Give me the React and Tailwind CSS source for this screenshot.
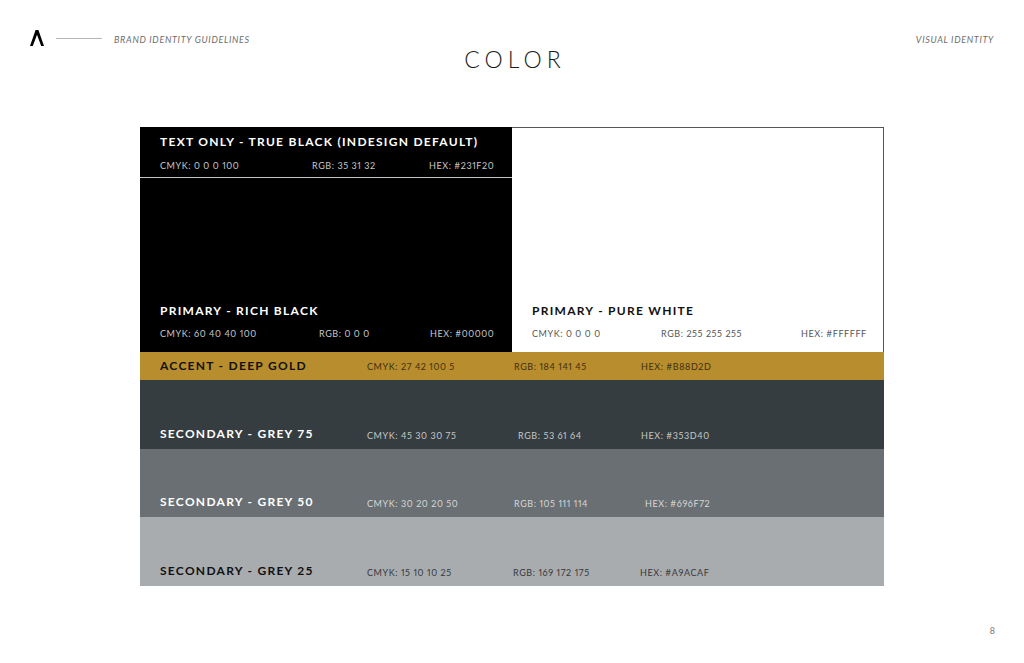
import React from "react";

const FONT = { fontFamily: '"Lato", "Noto Sans", sans-serif' };

function Title({ className = "", children }) {
  return <div className={`text-[12px] leading-[14px] font-bold tracking-[1.28px] whitespace-nowrap ${className}`}>{children}</div>;
}

function Spec({ className = "", children }) {
  return <div className={`shrink-0 text-[9px] leading-[12px] tracking-[0.58px] proportional-nums whitespace-nowrap ${className}`}>{children}</div>;
}

function GreyRow({ bg, text, specText, title, cmyk, rgb, hex, rgbClass }) {
  return (
    <div className={`h-[68.5px] flex items-end pl-5 pb-[8px] ${bg} ${text}`}>
      <Title className="w-[207px]">{title}</Title>
      <Spec className={`${specText} w-[147px] mb-[-1px]`}>{cmyk}</Spec>
      <Spec className={`${specText} ${rgbClass} mb-[-1px]`}>{rgb}</Spec>
      <Spec className={`${specText} mb-[-1px]`}>{hex}</Spec>
    </div>
  );
}

export default function App() {
  return (
    <div className="w-[1024px] h-[663px] bg-white overflow-hidden flex flex-col antialiased" style={FONT}>
      <header className="flex items-center h-[24px] mt-[28px] pl-[30px] pr-[30px]">
        <svg width="14" height="16" viewBox="0 0 14 16" className="shrink-0 mb-[4px]">
          <path d="M0 16 L5.6 0 H8.4 L14 16 H11.2 L7 4.8 L2.8 16 Z" fill="#000" />
        </svg>
        <div className="w-[46px] h-px bg-[#b5b5b5] ml-[12px] mb-[3px]"></div>
        <div className="ml-[12px] text-[9px] italic tracking-[0.68px] text-[#6d6d6d]">BRAND IDENTITY GUIDELINES</div>
        <div className="ml-auto text-[9px] italic tracking-[0.68px] text-[#6d6d6d]">VISUAL IDENTITY</div>
      </header>

      <h1 className="text-center text-[23px] leading-[26px] font-light tracking-[5px] text-[#1a1a1a] pl-[6px] mt-[-6px]">COLOR</h1>

      <main className="ml-[140px] w-[744px] mt-[55px]">
        <div className="flex h-[225px]">
          <div className="w-[372px] bg-black text-white flex flex-col">
            <div className="h-[51px] border-b border-[#c4c4c4] pl-5 pr-5 pt-[8px]">
              <Title>TEXT ONLY - TRUE BLACK (INDESIGN DEFAULT)</Title>
              <div className="flex mt-[11px] text-[#c9c9c9]">
                <Spec className="w-[152px]">CMYK: 0 0 0 100</Spec>
                <Spec className="w-[117px]">RGB: 35 31 32</Spec>
                <Spec>HEX: #231F20</Spec>
              </div>
            </div>
            <div className="mt-auto pl-5 pb-[12px]">
              <Title>PRIMARY - RICH BLACK</Title>
              <div className="flex mt-[10px] text-[#c9c9c9]">
                <Spec className="w-[159px]">CMYK: 60 40 40 100</Spec>
                <Spec className="w-[111px]">RGB: 0 0 0</Spec>
                <Spec>HEX: #00000</Spec>
              </div>
            </div>
          </div>
          <div className="flex-1 border border-b-0 border-l-0 border-[#555555] bg-white text-[#111111] flex flex-col">
            <div className="mt-auto pl-5 pb-[12px]">
              <Title>PRIMARY - PURE WHITE</Title>
              <div className="flex mt-[10px] text-[#555555]">
                <Spec className="w-[129px]">CMYK: 0 0 0 0</Spec>
                <Spec className="w-[140px]">RGB: 255 255 255</Spec>
                <Spec>HEX: #FFFFFF</Spec>
              </div>
            </div>
          </div>
        </div>

        <div className="h-[28px] bg-[#b88d2d] flex items-center pl-5 text-[#111111]">
          <Title className="w-[207px]">ACCENT - DEEP GOLD</Title>
          <Spec className="w-[147px] text-[#3d2f0e] mt-[1px]">CMYK: 27 42 100 5</Spec>
          <Spec className="w-[127px] text-[#3d2f0e] mt-[1px]">RGB: 184 141 45</Spec>
          <Spec className="text-[#3d2f0e] mt-[1px]">HEX: #B88D2D</Spec>
        </div>

        <GreyRow bg="bg-[#353d40]" text="text-white" specText="text-[#c4c8c9]" title="SECONDARY - GREY 75" cmyk="CMYK: 45 30 30 75" rgb="RGB: 53 61 64" hex="HEX: #353D40" rgbClass="w-[123px] ml-[4px]" />
        <GreyRow bg="bg-[#696f72]" text="text-white" specText="text-[#d6d8d9]" title="SECONDARY - GREY 50" cmyk="CMYK: 30 20 20 50" rgb="RGB: 105 111 114" hex="HEX: #696F72" rgbClass="w-[131px]" />
        <GreyRow bg="bg-[#a9acaf]" text="text-[#111111]" specText="text-[#35383a]" title="SECONDARY - GREY 25" cmyk="CMYK: 15 10 10 25" rgb="RGB: 169 172 175" hex="HEX: #A9ACAF" rgbClass="w-[127px] ml-[-1px]" />
      </main>

      <div className="text-right pr-[29px] mt-[39px] text-[9px] leading-[12px] text-[#777777]">8</div>
    </div>
  );
}
